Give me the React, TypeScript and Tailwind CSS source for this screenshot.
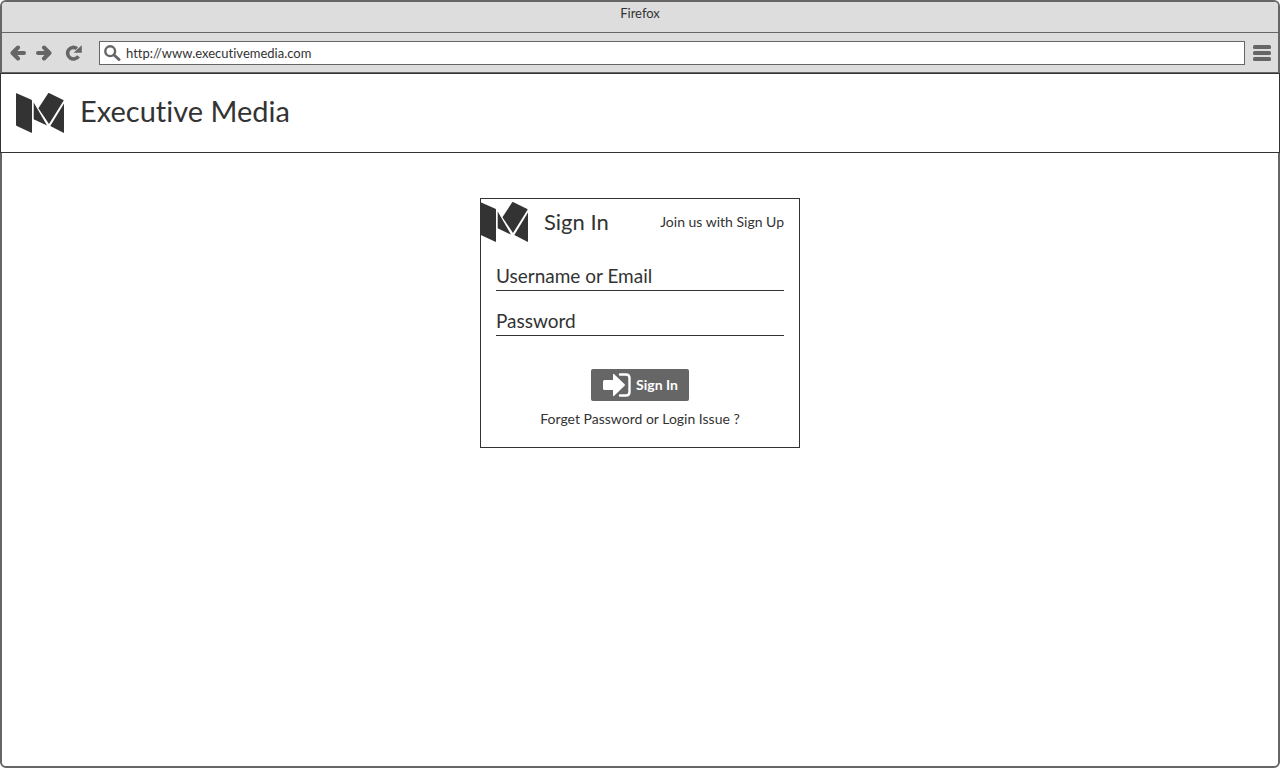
import React from "react";

function Logo({ className = "" }: { className?: string }) {
  return (
    <svg viewBox="0 0 48 40" className={`h-10 w-12 shrink-0 fill-[#333] ${className}`} aria-hidden="true">
      <path d="M0 .6Q0 0 .6 .2L15.4 6.7Q16 7 16 7.6V39.4Q16 40 15.3 39.8L.8 33Q0 32.6 0 31.8Z" />
      <path d="M17.7 9.6L31 32.6L18.2 26.6Q17.7 26.3 17.7 25.7Z" />
      <path d="M32.2 .3Q32.5 -.1 33 .1L47.3 7Q47.8 7.3 47.5 7.8L33 31L22.4 15.2Z" />
      <path d="M48 10.4V39.4Q48 40 47.4 39.8L34.3 33Z" />
    </svg>
  );
}

export default function App() {
  return (
    <div className="flex min-h-screen flex-col rounded-md border-2 border-[#666] bg-white font-['Lato','Noto_Sans',sans-serif] text-[#333] [font-variant-ligatures:none]">
      <div className="flex h-[31px] items-start justify-center rounded-t border-b border-[#666] bg-[#ddd] pt-px text-[13px] leading-5">
        Firefox
      </div>
      <div className="flex h-10 items-center border-b border-[#666] bg-[#ddd] pr-[7px] pl-[7px] text-[#666]">
        <button aria-label="Back" className="mr-2">
          <svg viewBox="0 0 18 16" className="h-4 w-[18px] fill-none stroke-current" strokeWidth="4" strokeLinecap="round" strokeLinejoin="round">
            <path d="M9 2.5L3.5 8L9 13.5M4 8H15" />
          </svg>
        </button>
        <button aria-label="Forward" className="mr-3">
          <svg viewBox="0 0 18 16" className="h-4 w-[18px] fill-none stroke-current" strokeWidth="4" strokeLinecap="round" strokeLinejoin="round">
            <path d="M9 2.5L14.5 8L9 13.5M14 8H3" />
          </svg>
        </button>
        <button aria-label="Reload" className="mr-4">
          <svg viewBox="0 0 18 16" className="h-4 w-[18px]">
            <path d="M13.4 11.2A5.8 5.8 0 1 1 12 3.6" fill="none" stroke="currentColor" strokeWidth="3.6" />
            <path d="M16.5 .8V7.4H9.3Z" fill="currentColor" stroke="currentColor" strokeWidth=".6" strokeLinejoin="round" />
          </svg>
        </button>
        <label className="flex h-6 flex-1 items-center border border-[#666] bg-white pl-1">
          <svg viewBox="0 0 17 16" className="mr-[5px] h-4 w-[17px] fill-none stroke-current" aria-hidden="true">
            <circle cx="6.2" cy="6.2" r="4.9" strokeWidth="2.4" />
            <path d="M10 10L15 14.5" strokeWidth="3" strokeLinecap="round" />
          </svg>
          <input
            aria-label="Address"
            defaultValue="http://www.executivemedia.com"
            className="min-w-0 flex-1 bg-transparent text-[13px] leading-5 text-[#333] outline-none"
          />
        </label>
        <button aria-label="Menu" className="ml-2">
          <svg viewBox="0 0 18 16" className="h-4 w-[18px] fill-current">
            <rect width="18" height="4" rx="1.5" />
            <rect y="6" width="18" height="4" rx="1.5" />
            <rect y="12" width="18" height="4" rx="1.5" />
          </svg>
        </button>
      </div>
      <header className="-mx-0.5 flex h-20 items-center border border-[#333] bg-white pl-[15px]">
        <Logo />
        <h1 className="pb-1 pl-4 text-[29px] leading-9">Executive Media</h1>
      </header>
      <main className="flex justify-center pt-[45px]">
        <form className="w-80 border border-[#333] pb-[18px]" onSubmit={(e) => e.preventDefault()}>
          <div className="flex h-[46px] items-center pr-[15px] pb-px">
            <Logo className="-ml-px" />
            <h2 className="flex-1 pl-4 text-[22px] leading-6">Sign In</h2>
            <a href="#signup" className="text-sm leading-5">Join us with Sign Up</a>
          </div>
          <div className="flex flex-col px-[15px] pt-4">
            <input
              aria-label="Username or Email"
              placeholder="Username or Email"
              className="h-[30px] border-b border-[#333] pb-px text-[19px] leading-6 outline-none placeholder:text-[#333]"
            />
            <input
              type="password"
              aria-label="Password"
              placeholder="Password"
              className="mt-[15px] h-[30px] border-b border-[#333] pb-px text-[19px] leading-6 outline-none placeholder:text-[#333]"
            />
          </div>
          <div className="flex flex-col items-center pt-[33px]">
            <button className="flex h-8 items-center gap-[5px] rounded-xs bg-[#666] px-3 pr-[11px] text-sm font-bold text-white">
              <svg viewBox="0 0 28 24" className="h-6 w-7" aria-hidden="true">
                <path d="M1.5 7H10V1.6Q10 .3 11.2 1.2L21.6 11.2Q22.4 12 21.6 12.8L11.2 22.8Q10 23.7 10 22.4V17H1.5Q0 17 0 15.5V8.5Q0 7 1.5 7Z" fill="currentColor" />
                <path d="M17 1.5H23Q26.5 1.5 26.5 5V19Q26.5 22.5 23 22.5H17" fill="none" stroke="currentColor" strokeWidth="2.4" strokeLinecap="round" />
              </svg>
              Sign In
            </button>
            <a href="#help" className="mt-2 text-sm leading-5">Forget Password or Login Issue ?</a>
          </div>
        </form>
      </main>
    </div>
  );
}
